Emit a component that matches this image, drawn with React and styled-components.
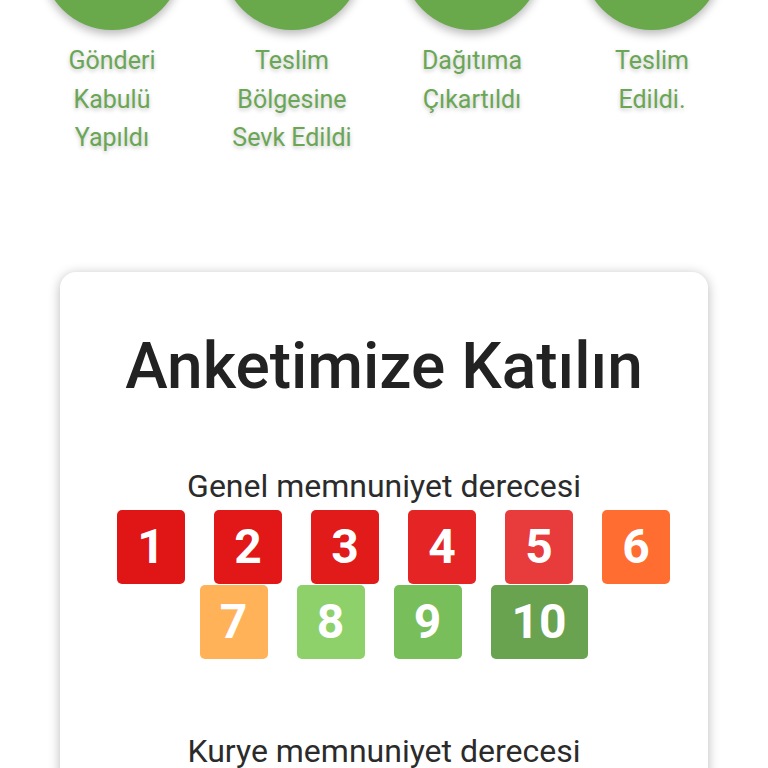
import styled, { createGlobalStyle } from "styled-components";

const GlobalStyle = createGlobalStyle`
  body {
    margin: 0;
    background: #ffffff;
    font-family: Roboto, "Noto Sans", sans-serif;
    overflow: hidden;
  }
`;

const Page = styled.div`
  display: flex;
  flex-direction: column;
`;

const Steps = styled.ul`
  list-style: none;
  margin: -110px 0 0;
  padding: 0 26px 0 22px;
  display: grid;
  grid-template-columns: repeat(4, 1fr);
`;

const Step = styled.li`
  display: flex;
  flex-direction: column;
  align-items: center;
  gap: 12px;
`;

const Dot = styled.div`
  width: 140px;
  height: 140px;
  border-radius: 50%;
  background: #69a94b;
  box-shadow: 0 4px 10px rgba(0, 0, 0, 0.28);
`;

const StepLabel = styled.span`
  color: #6aa655;
  font-size: 25px;
  line-height: 38.5px;
  text-align: center;
  text-shadow: 0 2px 4px rgba(0, 0, 0, 0.22);
  white-space: pre-line;
`;

const Card = styled.section`
  margin: 114px 60px 0;
  padding: 55px 30px 40px;
  background: #fff;
  border-radius: 16px;
  box-shadow: 0 2px 12px rgba(0, 0, 0, 0.28);
  display: flex;
  flex-direction: column;
  align-items: center;
`;

const Title = styled.h1`
  margin: 0 0 61px;
  font-size: 64px;
  line-height: 80px;
  font-weight: 500;
  color: #222;
`;

const Question = styled.div`
  display: flex;
  flex-direction: column;
  align-items: center;
  gap: 6px;
  margin-bottom: 74px;
`;

const QuestionLabel = styled.p`
  margin: 0;
  font-size: 32px;
  line-height: 36px;
  color: #2b2b2b;
`;

const Scale = styled.div`
  display: flex;
  flex-wrap: wrap;
  justify-content: center;
  column-gap: 29px;
  row-gap: 1px;
  padding-left: 19px;
`;

const ScoreButton = styled.button`
  min-width: ${(p) => (p.$wide ? 97 : 68)}px;
  height: 74px;
  padding: 0;
  border: none;
  border-radius: 5px;
  background: ${(p) => p.$color};
  color: #fff;
  font-family: Roboto, sans-serif;
  font-size: 48px;
  font-weight: 700;
  line-height: 74px;
  cursor: pointer;
`;

const colors = [
  "#e01616",
  "#e21818",
  "#e11a1a",
  "#e52525",
  "#e83b3b",
  "#ff6d31",
  "#ffb257",
  "#8ed16a",
  "#78bf5c",
  "#6aa350",
];

const steps = [
  "Gönderi\nKabulü\nYapıldı",
  "Teslim\nBölgesine\nSevk Edildi",
  "Dağıtıma\nÇıkartıldı",
  "Teslim\nEdildi.",
];

function ScoreScale() {
  return (
    <Scale>
      {colors.map((c, i) => (
        <ScoreButton key={i} $color={c} $wide={i === 9}>
          {i + 1}
        </ScoreButton>
      ))}
    </Scale>
  );
}

export default function App() {
  return (
    <Page>
      <GlobalStyle />
      <Steps>
        {steps.map((s) => (
          <Step key={s}>
            <Dot />
            <StepLabel>{s}</StepLabel>
          </Step>
        ))}
      </Steps>
      <Card>
        <Title>Anketimize Katılın</Title>
        <Question>
          <QuestionLabel>Genel memnuniyet derecesi</QuestionLabel>
          <ScoreScale />
        </Question>
        <Question>
          <QuestionLabel>Kurye memnuniyet derecesi</QuestionLabel>
          <ScoreScale />
        </Question>
      </Card>
    </Page>
  );
}
